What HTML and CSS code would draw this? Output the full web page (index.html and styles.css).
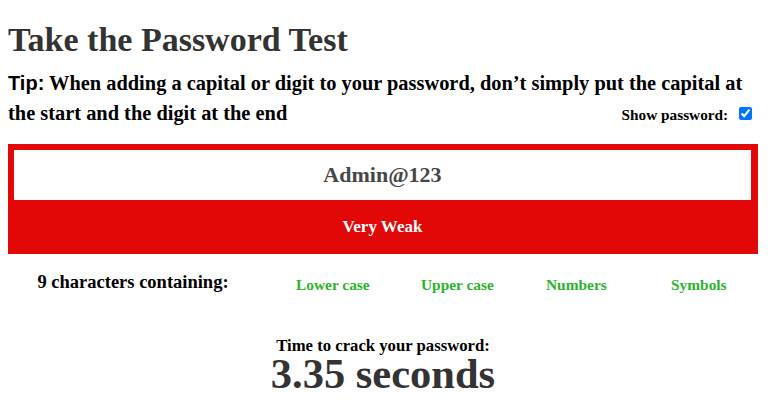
FILE: index.html
```html
<!DOCTYPE html>
<html>
<head>
<meta charset="utf-8">
<link rel="stylesheet" href="styles.css">
</head>
<body>
<div class="page">
  <h1 class="title">Take the Password Test</h1>
  <div class="tip-row">
    <p class="tip"><span class="tip-label">Tip:</span> When adding a capital or digit to your password, don’t simply put the capital at the start and the digit at the end</p>
    <label class="show">Show password: <input type="checkbox" checked></label>
  </div>
  <div class="meter">
    <div class="field">Admin@123</div>
    <div class="verdict">Very Weak</div>
  </div>
  <div class="stats">
    <div class="count">9 characters containing:</div>
    <div class="kind">Lower case</div>
    <div class="kind">Upper case</div>
    <div class="kind">Numbers</div>
    <div class="kind">Symbols</div>
  </div>
  <div class="crack">
    <div class="crack-label">Time to crack your password:</div>
    <div class="crack-time">3.35 seconds</div>
  </div>
</div>
</body>
</html>
```
FILE: styles.css
```css
body {
  margin: 0;
  background: #fff;
}
.page {
  padding: 0 8px;
  width: 750px;
  font-family: "Liberation Serif", serif;
  font-weight: bold;
  color: #000;
}
.title {
  font-family: "Liberation Serif", serif;
  font-weight: bold;
  font-size: 34px;
  line-height: 40px;
  color: #333;
  margin: 20px 0 8px;
}
.tip-row {
  display: grid;
}
.tip,
.show {
  grid-area: 1 / 1;
}
.tip {
  margin: 0;
  font-size: 20.4px;
  line-height: 30px;
}
.tip-label {
  font-family: "Liberation Sans", sans-serif;
  font-size: 20px;
}
.show {
  justify-self: end;
  align-self: end;
  font-size: 15.3px;
  line-height: 26px;
}
.show input {
  margin: 3px 6px 3px 7px;
  width: 13px;
  height: 13px;
}
.meter {
  margin-top: 16px;
  background: #e30808;
  padding: 6px 7px 0 6px;
}
.field {
  background: #fff;
  height: 50px;
  display: flex;
  align-items: center;
  justify-content: center;
  font-size: 22px;
  color: #474747;
}
.verdict {
  height: 54px;
  display: flex;
  align-items: center;
  justify-content: center;
  color: #fff;
  font-size: 17px;
}
.stats {
  display: grid;
  grid-template-columns: 250px repeat(4, 125px);
  align-items: start;
  margin-top: 18px;
}
.count {
  text-align: center;
  font-size: 18.5px;
  line-height: 20px;
}
.kind {
  color: #2db42d;
  font-size: 15.4px;
  line-height: 20px;
  padding: 3px 0 0 38px;
}
.crack {
  margin-top: 41px;
  text-align: center;
}
.crack-label {
  font-size: 16.7px;
  line-height: 20px;
}
.crack-time {
  font-size: 42.5px;
  line-height: 36px;
  color: #333;
}
```
